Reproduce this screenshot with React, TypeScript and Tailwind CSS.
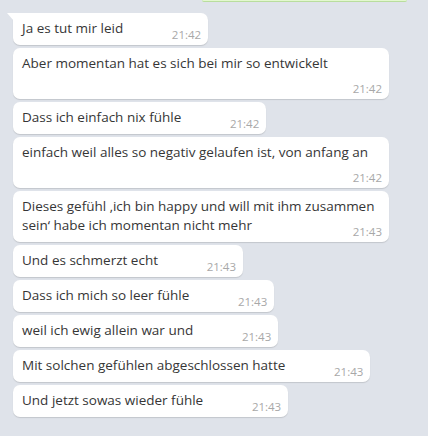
import React from "react";

const msgs: { t: string; time: string }[] = [
  { t: "Ja es tut mir leid", time: "21:42" },
  { t: "Aber momentan hat es sich bei mir so entwickelt", time: "21:42" },
  { t: "Dass ich einfach nix fühle", time: "21:42" },
  { t: "einfach weil alles so negativ gelaufen ist, von anfang an", time: "21:42" },
  { t: "Dieses gefühl ‚ich bin happy und will mit ihm zusammen sein‘ habe ich momentan nicht mehr", time: "21:43" },
  { t: "Und es schmerzt echt", time: "21:43" },
  { t: "Dass ich mich so leer fühle", time: "21:43" },
  { t: "weil ich ewig allein war und", time: "21:43" },
  { t: "Mit solchen gefühlen abgeschlossen hatte", time: "21:43" },
  { t: "Und jetzt sowas wieder fühle", time: "21:43" },
];

export default function App() {
  return (
    <div
      className="w-[428px] h-[436px] bg-[#dfe3ea] overflow-hidden text-[#363636]"
      style={{ fontFamily: '"Open Sans", "Noto Sans", sans-serif' }}
    >
      <div className="flex justify-end pr-[21px]">
        <div className="w-[205px] h-[2px] bg-[#e3f8cf] border-b border-[#b9dd9e] rounded-b-[4px]" />
      </div>
      <div className="flex flex-col items-start gap-[3px] pl-[13px] pt-[11px]">
        {msgs.map((m, i) => (
          <div
            key={i}
            className={
              "relative bg-white max-w-[376px] pl-[9px] pr-[7px] pt-[6px] pb-[7px] text-[13.5px] leading-[19px] shadow-[0_1px_1px_rgba(0,0,0,0.13)] " +
              (i === 0 ? "rounded-[7px] rounded-tl-none" : "rounded-[7px]")
            }
          >
            {i === 0 && (
              <svg
                className="absolute left-[-6px] top-0"
                width="7"
                height="8"
                viewBox="0 0 7 8"
              >
                <path d="M0 0 H7 V8 L0 0 Z" fill="#ffffff" />
              </svg>
            )}
            <span>{m.t}</span>
            <span className="inline-block w-[78px] h-[1px]" />
            <span className="absolute right-[7px] bottom-[3px] text-[11.5px] leading-[14px] text-[#a8a8a8]">
              {m.time}
            </span>
          </div>
        ))}
      </div>
    </div>
  );
}
